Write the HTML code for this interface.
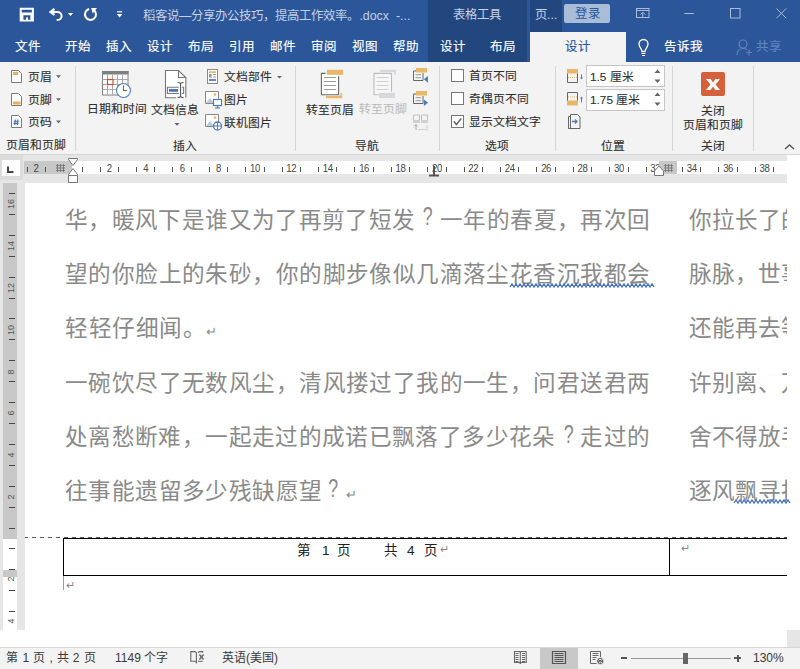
<!DOCTYPE html>
<html lang="zh-CN">
<head>
<meta charset="utf-8">
<style>
*{margin:0;padding:0;box-sizing:border-box}
html,body{width:800px;height:669px;overflow:hidden;background:#fff}
body{position:relative;font-family:"Liberation Sans",sans-serif;color:#333}
.a{position:absolute;white-space:nowrap}
svg{position:absolute;overflow:visible}
#title{left:0;top:0;width:800px;height:62px;background:#2B579A}
.tt{color:#fff;font-size:12.5px;line-height:16px;-webkit-text-stroke:0.15px #fff}
.rt{color:#2E2E2E;font-size:11.8px;line-height:16px;-webkit-text-stroke:0.1px #2E2E2E}
.sep{position:absolute;width:1px;background:#D5D5D5;top:66px;height:85px}
.tick{position:absolute;width:1px;height:5px;background:#555;top:167px}
.rnum{position:absolute;font-size:9.6px;line-height:10px;color:#444;top:163.6px;letter-spacing:-0.4px;transform:scaleY(1.05)}
.vt{position:absolute;left:9px;width:5.5px;height:1px;background:#444}
.vn{position:absolute;left:8px;font-size:9px;line-height:10px;color:#555;transform:rotate(-90deg);transform-origin:center}
.body{position:absolute;font-size:22.6px;line-height:30px;color:#8A8A8A;white-space:nowrap}
.jl{text-align:justify;text-align-last:justify}
.pm{font-size:13px;color:#888;margin-left:-1px}
.pm2{font-size:11px;color:#888;line-height:14px}
.ft{font-size:13.5px;line-height:18px;color:#222}
.st{font-size:12px;line-height:16px;color:#3A3A3A;margin-top:1.5px}
.q{display:inline-block;line-height:0;width:0.96em;text-align:center;font-size:1.12em;position:relative;left:4px;top:-2.5px;transform:scaleX(0.7);font-weight:300}
</style>
</head>
<body>
<!-- title bar + tabs -->
<div class="a" id="title"></div>
<div class="a" style="left:428px;top:0;width:99px;height:62px;background:#22467E"></div>
<div class="a" style="left:527px;top:0;width:3px;height:31px;background:#2B579A"></div>
<div class="a" style="left:530px;top:0;width:32px;height:32px;background:#22467E"></div>
<div class="a" style="left:530px;top:32px;width:96px;height:30px;background:#F3F3F3"></div>

<!-- QAT icons -->
<svg style="left:0;top:0" width="140" height="31">
  <path fill="#fff" fill-rule="evenodd" d="M19.7 7.7H33.9V21.6H19.7Z M21.7 9.7H31.9V12.6H21.7Z M23.4 15.2H30.4V19.8H23.4Z"/>
  <rect x="26" y="17.4" width="2" height="3" fill="#fff"/>
  <path d="M54.5 8.8l-4 3.1 4 3.1" fill="none" stroke="#fff" stroke-width="2.2" stroke-linejoin="miter"/>
  <path d="M50 11.9h7.5a4.1 4.1 0 0 1 0 8.2h-0.8" fill="none" stroke="#fff" stroke-width="2"/>
  <path d="M67.9 12.9h5.2l-2.6 3.1z" fill="#fff"/>
  <path d="M89.08 9.09A5.5 5.5 0 1 0 93.65 9.9" fill="none" stroke="#fff" stroke-width="2"/>
  <path d="M91.2 8h5.8l-4.3 5.5z" fill="#fff"/>
  <path d="M117 11.8h5.2" stroke="#fff" stroke-width="1.2"/>
  <path d="M116.9 14h5.4l-2.7 3.5z" fill="#fff"/>
</svg>
<div class="a" style="left:143px;top:7.5px;font-size:12.4px;line-height:16px;color:#C6D1E4">稻客说—分享办公技巧，提高工作效率。.docx&nbsp; -...</div>
<div class="a" style="left:453px;top:6.5px;font-size:12.4px;line-height:16px;color:#C6D1E4">表格工具</div>
<div class="a" style="left:535px;top:6.5px;font-size:12.4px;line-height:16px;color:#C6D1E4">页...</div>
<div class="a" style="left:564px;top:4px;width:46px;height:19px;background:#A9BCD8;border-radius:2px"></div>
<div class="a" style="left:574.5px;top:6px;font-size:12.5px;line-height:16px;color:#2B579A">登录</div>
<svg style="left:630px;top:0" width="170" height="31">
  <g fill="none" stroke="#A9BBD7" stroke-width="1">
    <rect x="6.5" y="8.5" width="12.5" height="9"/>
    <path d="M6.5 10.5h12.5M12.75 17.5v-5M10.5 14.5l2.25-2.25 2.25 2.25"/>
    <path d="M54.3 13.5h9.5"/>
    <rect x="100.5" y="8.5" width="9.5" height="9.5"/>
    <path d="M146.5 8.5l9.7 9.7M156.2 8.5l-9.7 9.7"/>
  </g>
</svg>

<!-- tabs -->
<div class="a tt" style="left:15px;top:39px">文件</div>
<div class="a tt" style="left:65px;top:39px">开始</div>
<div class="a tt" style="left:106px;top:39px">插入</div>
<div class="a tt" style="left:147px;top:39px">设计</div>
<div class="a tt" style="left:188px;top:39px">布局</div>
<div class="a tt" style="left:229px;top:39px">引用</div>
<div class="a tt" style="left:270px;top:39px">邮件</div>
<div class="a tt" style="left:311px;top:39px">审阅</div>
<div class="a tt" style="left:352px;top:39px">视图</div>
<div class="a tt" style="left:393px;top:39px">帮助</div>
<div class="a tt" style="left:440px;top:39px">设计</div>
<div class="a tt" style="left:490px;top:39px">布局</div>
<div class="a tt" style="left:565px;top:39px;color:#2B579A;-webkit-text-stroke:0.15px #2B579A">设计</div>
<svg style="left:632px;top:31px" width="30" height="31">
  <path d="M10 20.5c0-2.5-3-4-3-7.5a4.5 4.5 0 0 1 9 0c0 3.5-3 5-3 7.5z" fill="none" stroke="#fff" stroke-width="1.3"/>
  <path d="M9.5 22.5h4M10 24.5h3" stroke="#fff" stroke-width="1.1"/>
</svg>
<div class="a tt" style="left:664px;top:39px">告诉我</div>
<svg style="left:733px;top:31px" width="30" height="31">
  <circle cx="10" cy="13" r="4" fill="none" stroke="#6283BA" stroke-width="1.2"/>
  <path d="M4 24c0-4 2.5-6.5 6-6.5 2 0 3 .5 4 1.3" fill="none" stroke="#6283BA" stroke-width="1.2"/>
  <path d="M13 21.5h6M16 18.5v6" stroke="#6283BA" stroke-width="1.2"/>
</svg>
<div class="a tt" style="left:756px;top:39px;color:#6283BA;-webkit-text-stroke:0.15px #6283BA">共享</div>

<!-- ribbon -->
<div class="a" style="left:0;top:62px;width:800px;height:93px;background:#F3F3F3;border-bottom:1px solid #D6D6D6"></div>
<div class="sep" style="left:75px"></div>
<div class="sep" style="left:295px"></div>
<div class="sep" style="left:439px"></div>
<div class="sep" style="left:555px"></div>
<div class="sep" style="left:672px"></div>
<div class="sep" style="left:753px"></div>

<!-- group 1 -->
<svg style="left:0;top:62px" width="75" height="93">
  <g fill="#fff" stroke="#7A7A7A" stroke-width="1">
    <path d="M11.5 8.5h7l3 3v9h-10z"/>
    <path d="M11.5 31.5h7l3 3v9h-10z"/>
    <path d="M11.5 53.5h7l3 3v9h-10z"/>
  </g>
  <rect x="13" y="10" width="5" height="3" fill="#E8B05C"/>
  <rect x="13" y="39.5" width="7.5" height="3" fill="#E8B05C"/>
  <path d="M15.3 57.5l-0.6 5.5M17.9 57.5l-0.6 5.5M13.8 59.2h5M13.6 61.4h5" stroke="#3F6FB8" stroke-width="1.1" fill="none"/>
  <g fill="#666"><path d="M56 13.2h5l-2.5 2.7z"/><path d="M56 36.2h5l-2.5 2.7z"/><path d="M56 58.5h5l-2.5 2.7z"/></g>
</svg>
<div class="a rt" style="left:28px;top:68.5px">页眉</div>
<div class="a rt" style="left:28px;top:91.5px">页脚</div>
<div class="a rt" style="left:28px;top:113.5px">页码</div>
<div class="a rt" style="left:6px;top:137px">页眉和页脚</div>

<!-- group 2 insert -->
<svg style="left:75px;top:62px" width="220" height="93">
  <!-- calendar -->
  <rect x="27.5" y="9.5" width="25.5" height="23.5" fill="#fff" stroke="#808080"/>
  <rect x="27" y="9" width="26.5" height="3.5" fill="#808080"/>
  <g stroke="#A8A8A8" stroke-width="1"><path d="M27.5 17.5h25.5M27.5 22.5h25.5M27.5 27.5h25.5M32.5 12.5v20.5M37.5 12.5v20.5M42.5 12.5v20.5M47.5 12.5v20.5"/></g>
  <rect x="32.5" y="17.5" width="5.5" height="5" fill="#fff" stroke="#D24F28" stroke-width="1.2"/>
  <circle cx="48.5" cy="28.5" r="7" fill="#fff" stroke="#4A7BC0" stroke-width="1.1"/>
  <path d="M48.5 23.5v5h3.5" fill="none" stroke="#666" stroke-width="1.1"/>
  <!-- doc info -->
  <path d="M90.5 8.5H103.5L110.8 15.5V35.8H90.5Z" fill="#fff"/>
  <path d="M100.9 35.8H90.5V8.5H103.5L110.8 15.5V35.8" fill="none" stroke="#777" stroke-width="1.1"/>
  <path d="M103.5 8.5V15.5H110.8" fill="none" stroke="#777" stroke-width="1.1"/>
  <path d="M103.7 25.3H92.4V31.5H103.7M107.1 25.3H108.6V31.5H107.1" fill="none" stroke="#777" stroke-width="1.1"/>
  <rect x="94" y="27" width="9" height="2.8" fill="#4A78BE"/>
  <path d="M105.6 21.5V34.5M102.5 20.5Q105.6 20.5 105.6 22Q105.6 20.5 108.6 20.5M102.5 35.5Q105.6 35.5 105.6 34Q105.6 35.5 108.6 35.5" fill="none" stroke="#555" stroke-width="1.1"/>
  <path d="M99.5 61h5l-2.5 2.8z" fill="#666"/>
  <!-- quick parts -->
  <rect x="132.5" y="7.5" width="10" height="14" fill="#fff" stroke="#888"/>
  <rect x="134" y="9.3" width="7" height="1.6" fill="#E8B05C"/>
  <rect x="134" y="12" width="2.6" height="3.6" fill="#999"/>
  <path d="M138 12.5h3M138 15h3" stroke="#999"/>
  <rect x="134" y="17.2" width="7" height="1.6" fill="#3F6FB8"/>
  <path d="M202 14h5l-2.5 2.5z" fill="#666"/>
  <!-- picture -->
  <path d="M130.5 29.5h13v12h-13z" fill="#fff" stroke="#888"/>
  <path d="M131 41l4-5 4 5z" fill="#B9C9E0"/>
  <circle cx="140" cy="32.5" r="1.3" fill="#E8B05C"/>
  <rect x="138.5" y="37.5" width="8" height="6" fill="#fff" stroke="#4C7DC4" stroke-width="1.2"/>
  <path d="M142.5 43.5v2.5M140 46h5" stroke="#4C7DC4" stroke-width="1.2"/>
  <!-- online picture -->
  <path d="M130.5 52.5h13v12h-13z" fill="#fff" stroke="#888"/>
  <path d="M131 64l4-5 4 5z" fill="#B9C9E0"/>
  <circle cx="140" cy="55.5" r="1.3" fill="#E8B05C"/>
  <circle cx="142.5" cy="64" r="4" fill="#fff" stroke="#4C7DC4" stroke-width="1.3"/>
  <path d="M138.5 64h8M142.5 60v8" stroke="#4C7DC4" stroke-width="1"/>
</svg>
<div class="a rt" style="left:87px;top:101px">日期和时间</div>
<div class="a rt" style="left:151px;top:102px">文档信息</div>
<div class="a rt" style="left:224px;top:69px">文档部件</div>
<div class="a rt" style="left:224px;top:92px">图片</div>
<div class="a rt" style="left:224px;top:115px">联机图片</div>
<div class="a rt" style="left:173px;top:138px">插入</div>

<!-- group 3 nav -->
<svg style="left:295px;top:62px" width="145" height="93">
  <path d="M26.4 11.4H43.6V32.8H26.4Z" fill="#fff"/>
  <rect x="31.9" y="7.8" width="16.1" height="5" fill="#E8B76A"/>
  <path d="M30.6 11.4H26.4V32.8H43.6V14.2" fill="none" stroke="#6A6A6A" stroke-width="1.1"/>
  <g stroke="#9A9A9A"><path d="M29 15.5h12M29 19.5h12M29 23.5h12M29 27.5h12"/></g>
  <rect x="31" y="33.9" width="16.1" height="2.3" fill="#E8B76A"/>
  <rect x="45.5" y="30.9" width="1.6" height="5.3" fill="#E8B76A"/>
  <path d="M79 11.4H96.5V32.8H79Z" fill="#F7F7F7"/>
  <rect x="85" y="7.8" width="16" height="2.2" fill="#D8D8DC"/>
  <rect x="99" y="7.8" width="2" height="5" fill="#D8D8DC"/>
  <path d="M83.8 32.8H79V11.4H96.5V29.8" fill="none" stroke="#BDBDBD" stroke-width="1.1"/>
  <g stroke="#D0D0D0"><path d="M81.5 15.5h12M81.5 19.5h12M81.5 23.5h12M81.5 27.5h12"/></g>
  <rect x="84" y="30.9" width="16" height="5.1" fill="#D8D8DC"/>
  <!-- prev/next -->
  <rect x="121" y="6" width="11" height="4.5" fill="#E8B76A"/>
  <path d="M121 9h-2.5v9.5h9.5v-7.5" fill="none" stroke="#666"/>
  <path d="M120.5 12.7h5.5M120.5 15.7h5.5" stroke="#999"/>
  <path d="M133 14v6.7l-4.2-3.35z" fill="#4C7DC4"/>
  <rect x="121" y="29" width="11" height="4.5" fill="#E8B76A"/>
  <path d="M121 32h-2.5v9.5h9.5v-7.5" fill="none" stroke="#666"/>
  <path d="M120.5 35.7h5.5M120.5 38.7h5.5" stroke="#999"/>
  <path d="M128.9 37.4v6.7l4.2-3.35z" fill="#4C7DC4"/>
  <g fill="none" stroke="#BDBDBD"><path d="M118.5 60.5v-7.5h6v7.5M126.5 60.5v-7.5h6v7.5"/></g>
  <rect x="118" y="58" width="7" height="3" fill="#D0D0D0"/><rect x="126" y="58" width="7" height="3" fill="#D0D0D0"/>
  <path d="M121 68v-5.5M119 64.5l2-2 2 2" stroke="#AAA" fill="none"/>
  <path d="M123.5 67.5h1M125.5 67.5h1M127.5 67.5h1M129.5 67.5h1M132 63.5v1M132 65.5v1M132 67.5v1" stroke="#AAA"/>
</svg>
<div class="a rt" style="left:306px;top:101.5px">转至页眉</div>
<div class="a rt" style="left:359px;top:101px;color:#BDBDBD;-webkit-text-stroke:0.1px #BDBDBD">转至页脚</div>
<div class="a rt" style="left:355px;top:138px">导航</div>

<!-- group 4 options -->
<div class="a" style="left:451px;top:69px;width:13px;height:13px;border:1px solid #777;background:#fff"></div>
<div class="a" style="left:451px;top:92px;width:13px;height:13px;border:1px solid #777;background:#fff"></div>
<div class="a" style="left:451px;top:115px;width:13px;height:13px;border:1px solid #777;background:#fff"></div>
<svg style="left:451px;top:115px" width="13" height="13"><path d="M2.8 6.3l2.6 3.2 4.8-6" fill="none" stroke="#666" stroke-width="1.5"/></svg>
<div class="a rt" style="left:469px;top:67.5px">首页不同</div>
<div class="a rt" style="left:469px;top:90.5px">奇偶页不同</div>
<div class="a rt" style="left:469px;top:113.5px">显示文档文字</div>
<div class="a rt" style="left:485px;top:138px">选项</div>

<!-- group 5 position -->
<svg style="left:555px;top:62px" width="117" height="93">
  <rect x="12" y="7" width="11" height="4.5" fill="#E8B76A"/>
  <path d="M12.5 11.5v9h10v-9" fill="none" stroke="#666"/>
  <path d="M13 15.5h10" stroke="#E8B76A" stroke-dasharray="1 1"/>
  <path d="M26.5 12.5v4.5" stroke="#4C7DC4"/><path d="M25 15.5h3l-1.5 2z" fill="#4C7DC4"/>
  <path d="M12.5 39v-8.5h10V39" fill="none" stroke="#666"/>
  <path d="M13 35h10" stroke="#E8B76A" stroke-dasharray="1 1"/>
  <rect x="12" y="38.5" width="11" height="5" fill="#E8B76A"/>
  <path d="M26.5 36v4.5" stroke="#4C7DC4"/><path d="M25 36.5h3l-1.5 -2z" fill="#4C7DC4"/>
  <path d="M15.5 52.5h7l2.5 2.5v11.5h-9.5z" fill="none" stroke="#666"/>
  <path d="M13.5 54.5v12h2M13.5 54.5h2" fill="none" stroke="#666"/>
  <path d="M13.5 66.5h9.5" stroke="#666"/>
  <path d="M17 59.5h5M20 57.5l2 2-2 2" fill="none" stroke="#4C7DC4" stroke-width="1.3"/>
</svg>
<div class="a" style="left:586px;top:65px;width:79px;height:22px;border:1px solid #C6C6C6;background:#fff"></div>
<div class="a" style="left:586px;top:89px;width:79px;height:22px;border:1px solid #C6C6C6;background:#fff"></div>
<div class="a rt" style="left:590px;top:69px">1.5 厘米</div>
<div class="a rt" style="left:590px;top:92px">1.75 厘米</div>
<svg style="left:650px;top:62px" width="15" height="50">
  <path d="M4.5 11l3-3.5 3 3.5zM4.5 17.5l3 3.5 3-3.5zM4.5 34l3-3.5 3 3.5zM4.5 40.5l3 3.5 3-3.5z" fill="#666"/>
</svg>
<div class="a rt" style="left:601px;top:138px">位置</div>

<!-- group 6 close -->
<div class="a" style="left:701px;top:72px;width:24px;height:24px;background:#D6603C;border-radius:2px"></div>
<svg style="left:701px;top:72px" width="24" height="24"><path d="M5 7H9.6L12 10.4L14.4 7H19L14.5 12.4L19 18H14.4L12 14.4L9.6 18H5L9.5 12.4Z" fill="#fff"/></svg>
<div class="a rt" style="left:701px;top:103px">关闭</div>
<div class="a rt" style="left:683px;top:117px">页眉和页脚</div>
<div class="a rt" style="left:701px;top:138px">关闭</div>
<svg style="left:780px;top:140px" width="18" height="12"><path d="M5 9l4.5-4 4.5 4" fill="none" stroke="#555" stroke-width="1.4"/></svg>

<!-- doc -->
<div class="body jl" style="left:65px;top:205.5px;width:585px">华，暖风下是谁又为了再剪了短发<span class="q">?</span>一年的春夏，再次回</div>
<div class="body jl" style="left:65px;top:259.5px;width:585px">望的你脸上的朱砂，你的脚步像似几滴落尘花香沉我都会</div>
<div class="body" style="letter-spacing:0.6px;left:65px;top:314px">轻轻仔细闻。<span class="pm">↵</span></div>
<div class="body jl" style="left:65px;top:368.5px;width:585px">一碗饮尽了无数风尘，清风搂过了我的一生，问君送君两</div>
<div class="body jl" style="left:65px;top:423px;width:585px">处离愁断难，一起走过的成诺已飘落了多少花朵<span class="q">?</span>走过的</div>
<div class="body" style="letter-spacing:0.4px;left:65px;top:477px">往事能遗留多少残缺愿望<span class="q" style="left:-1.5px;width:0.98em">?</span><span class="pm">↵</span></div>
<div class="a" style="left:680px;top:190px;width:107px;height:320px;overflow:hidden">
<div class="body" style="left:9px;top:15.5px">你拉长了的</div>
<div class="body" style="left:9px;top:69.5px">脉脉，世事</div>
<div class="body" style="left:9px;top:124px">还能再去等</div>
<div class="body" style="left:9px;top:178.5px">许别离、万</div>
<div class="body" style="left:9px;top:233px">舍不得放手</div>
<div class="body" style="left:9px;top:287px">逐风飘寻找</div>
</div>
<svg style="left:510px;top:282.5px" width="145" height="6"><path d="M0 4 l2 -3 l2 3 l2 -3 l2 3 l2 -3 l2 3 l2 -3 l2 3 l2 -3 l2 3 l2 -3 l2 3 l2 -3 l2 3 l2 -3 l2 3 l2 -3 l2 3 l2 -3 l2 3 l2 -3 l2 3 l2 -3 l2 3 l2 -3 l2 3 l2 -3 l2 3 l2 -3 l2 3 l2 -3 l2 3 l2 -3 l2 3 l2 -3 l2 3 l2 -3 l2 3 l2 -3 l2 3 l2 -3 l2 3 l2 -3 l2 3 l2 -3 l2 3 l2 -3 l2 3 l2 -3 l2 3 l2 -3 l2 3 l2 -3 l2 3 l2 -3 l2 3 l2 -3 l2 3 l2 -3 l2 3 l2 -3 l2 3 l2 -3 l2 3 l2 -3 l2 3 l2 -3 l2 3 l2 -3 l2 3 l2 -3 l2 3" fill="none" stroke="#4472C4" stroke-width="1.3"/></svg>
<svg style="left:734px;top:499px" width="54" height="6"><path d="M0 4 l2 -3 l2 3 l2 -3 l2 3 l2 -3 l2 3 l2 -3 l2 3 l2 -3 l2 3 l2 -3 l2 3 l2 -3 l2 3 l2 -3 l2 3 l2 -3 l2 3 l2 -3 l2 3 l2 -3 l2 3 l2 -3 l2 3 l2 -3 l2 3 l2 -3 l2 3" fill="none" stroke="#4472C4" stroke-width="1.3"/></svg>
<div class="a" style="left:25px;top:537px;width:762px;height:1px;background:repeating-linear-gradient(90deg,#5A5A5A 0 3.5px,transparent 3.5px 7px,#5A5A5A 7px 8px)"></div>
<div class="a" style="left:63px;top:538px;width:724px;height:38px;border:1px solid #000;border-right:none"></div>
<div class="a" style="left:669px;top:538px;width:1px;height:38px;background:#000"></div>
<div class="a" style="left:63px;top:576px;width:1px;height:14px;background:#999"></div>
<div class="a ft" style="left:297px;top:541.5px">第</div><div class="a ft" style="left:322px;top:541.5px">1</div><div class="a ft" style="left:337px;top:541.5px">页</div><div class="a ft" style="left:384px;top:541.5px">共</div><div class="a ft" style="left:407px;top:541.5px">4</div><div class="a ft" style="left:424px;top:541.5px">页</div><div class="a pm2" style="left:440px;top:542px">↵</div>
<div class="a pm2" style="left:681px;top:541px">↵</div>
<div class="a pm2" style="left:66px;top:578px">↵</div>
<div class="a" style="left:0;top:647px;width:800px;height:22px;background:#F3F3F3;border-top:1px solid #D6D6D6"></div>
<div class="a st" style="left:5.5px;top:648.5px">第</div><div class="a st" style="left:22.5px;top:648.5px">1</div><div class="a st" style="left:32.5px;top:648.5px">页</div><div class="a st" style="left:49.5px;top:648.5px">,</div><div class="a st" style="left:56.5px;top:648.5px">共</div><div class="a st" style="left:72.8px;top:648.5px">2</div><div class="a st" style="left:83.7px;top:648.5px">页</div>
<div class="a st" style="left:115px;top:648.5px">1149 个字</div>
<svg style="left:188px;top:650px" width="20" height="16"><path d="M7.2 1.6H2.8V11.3H8.4M7.2 1.6L8.4 2.8V12.5M10 2.8L11.2 1.6H14.7V2.8M10 11.3H14.7" fill="none" stroke="#666" stroke-width="1.1"/><path d="M7.2 12.3L8.4 13.7L9.6 12.3Z" fill="#666"/><path d="M11.4 4.5L15.6 9.5M15.6 4.5L11.4 9.5" stroke="#666" stroke-width="1.5"/></svg>
<div class="a st" style="left:222px;top:648.5px">英语(美国)</div>
<svg style="left:510px;top:648px" width="20" height="18"><path d="M4.5 3.5H9.5L10.3 4.3L11.1 3.5H16.2V14.5H11.1L10.3 15.3L9.5 14.5H4.5Z" fill="none" stroke="#666" stroke-width="1.1"/><path d="M10.3 4.3V16" stroke="#666" stroke-width="1.1"/><path d="M5.5 5.5h3M5.5 7.5h3M5.5 9.5h3M5.5 11.5h3M5.5 13.5h3M12 5.5h3M12 7.5h3M12 9.5h3M12 11.5h3M12 13.5h3" stroke="#666" stroke-width="1"/></svg>
<div class="a" style="left:540px;top:648px;width:38px;height:21px;background:#C8C8C8"></div>
<svg style="left:549px;top:648px" width="20" height="18"><path d="M3.5 3.5H16.5V15.5H3.5Z" fill="none" stroke="#555" stroke-width="1.2"/><path d="M5.5 5.5h9M5.5 7.5h9M5.5 9.5h9M5.5 11.5h9M5.5 13.5h9" stroke="#555" stroke-width="1"/></svg>
<svg style="left:588px;top:648px" width="20" height="18"><path d="M12.5 9.5V3.5H2.5V15.5H8.5" fill="none" stroke="#666" stroke-width="1"/><path d="M4.5 5.5h6M4.5 7.5h6M4.5 9.5h4M4.5 11.5h3" stroke="#666"/><circle cx="12.3" cy="13" r="3.6" fill="#666" stroke="#F3F3F3" stroke-width="0.8"/><path d="M10.5 12.5l1.5-1.5 1 1 1.5-.5M11 14.8l1.5-.8 1.6 1" stroke="#F3F3F3" stroke-width="0.9" fill="none"/></svg>
<div class="a" style="left:621px;top:657px;width:6px;height:2px;background:#555"></div>
<div class="a" style="left:631px;top:658px;width:100px;height:1px;background:#999"></div>
<div class="a" style="left:683px;top:653px;width:5px;height:11px;background:#666"></div>
<div class="a" style="left:734px;top:657px;width:7px;height:2px;background:#555"></div>
<div class="a" style="left:736.5px;top:654.5px;width:2px;height:7px;background:#555"></div>
<div class="a st" style="left:753px;top:648.5px">130%</div>
<!-- rulers -->
<div class="a" style="left:0;top:155px;width:787px;height:28px;background:#E6E6E6"></div>
<div class="a" style="left:0;top:155px;width:23px;height:25px;background:#DCDCDC"></div><div class="a" style="left:2px;top:160px;width:17.5px;height:16px;background:#fff"></div>
<svg style="left:0;top:155px" width="22" height="25"><path d="M8 11.5v5.5h5.5" fill="none" stroke="#444" stroke-width="2"/></svg>
<div class="a" style="left:24px;top:161px;width:763px;height:13px;background:#fff"></div>
<div class="a" style="left:24px;top:161px;width:48px;height:13px;background:#C8C8C8"></div>
<div class="tick" style="left:27px"></div>
<div class="tick" style="left:45px"></div>
<div class="tick" style="left:63px"></div>
<div class="tick" style="left:82px"></div>
<div class="tick" style="left:100px"></div>
<div class="tick" style="left:118px"></div>
<div class="tick" style="left:136px"></div>
<div class="tick" style="left:154px"></div>
<div class="tick" style="left:172px"></div>
<div class="tick" style="left:191px"></div>
<div class="tick" style="left:209px"></div>
<div class="tick" style="left:227px"></div>
<div class="tick" style="left:245px"></div>
<div class="tick" style="left:264px"></div>
<div class="tick" style="left:282px"></div>
<div class="tick" style="left:300px"></div>
<div class="tick" style="left:318px"></div>
<div class="tick" style="left:336px"></div>
<div class="tick" style="left:354px"></div>
<div class="tick" style="left:373px"></div>
<div class="tick" style="left:391px"></div>
<div class="tick" style="left:409px"></div>
<div class="tick" style="left:427px"></div>
<div class="tick" style="left:446px"></div>
<div class="tick" style="left:464px"></div>
<div class="tick" style="left:482px"></div>
<div class="tick" style="left:500px"></div>
<div class="tick" style="left:518px"></div>
<div class="tick" style="left:536px"></div>
<div class="tick" style="left:555px"></div>
<div class="tick" style="left:573px"></div>
<div class="tick" style="left:591px"></div>
<div class="tick" style="left:609px"></div>
<div class="tick" style="left:628px"></div>
<div class="tick" style="left:646px"></div>
<div class="tick" style="left:664px"></div>
<div class="tick" style="left:682px"></div>
<div class="tick" style="left:700px"></div>
<div class="tick" style="left:718px"></div>
<div class="tick" style="left:737px"></div>
<div class="tick" style="left:755px"></div>
<div class="tick" style="left:773px"></div>
<div class="rnum" style="left:109.3px;width:20px;margin-left:-10px;text-align:center">2</div>
<div class="rnum" style="left:145.7px;width:20px;margin-left:-10px;text-align:center">4</div>
<div class="rnum" style="left:182.1px;width:20px;margin-left:-10px;text-align:center">6</div>
<div class="rnum" style="left:218.5px;width:20px;margin-left:-10px;text-align:center">8</div>
<div class="rnum" style="left:254.9px;width:20px;margin-left:-10px;text-align:center">10</div>
<div class="rnum" style="left:291.3px;width:20px;margin-left:-10px;text-align:center">12</div>
<div class="rnum" style="left:327.7px;width:20px;margin-left:-10px;text-align:center">14</div>
<div class="rnum" style="left:364.1px;width:20px;margin-left:-10px;text-align:center">16</div>
<div class="rnum" style="left:400.5px;width:20px;margin-left:-10px;text-align:center">18</div>
<div class="rnum" style="left:436.9px;width:20px;margin-left:-10px;text-align:center">20</div>
<div class="rnum" style="left:473.3px;width:20px;margin-left:-10px;text-align:center">22</div>
<div class="rnum" style="left:509.7px;width:20px;margin-left:-10px;text-align:center">24</div>
<div class="rnum" style="left:546.1px;width:20px;margin-left:-10px;text-align:center">26</div>
<div class="rnum" style="left:582.5px;width:20px;margin-left:-10px;text-align:center">28</div>
<div class="rnum" style="left:618.9px;width:20px;margin-left:-10px;text-align:center">30</div>
<div class="rnum" style="left:655.3px;width:20px;margin-left:-10px;text-align:center">32</div>
<div class="rnum" style="left:691.7px;width:20px;margin-left:-10px;text-align:center">34</div>
<div class="rnum" style="left:728.1px;width:20px;margin-left:-10px;text-align:center">36</div>
<div class="rnum" style="left:764.5px;width:20px;margin-left:-10px;text-align:center">38</div>
<div class="rnum" style="left:26px;width:20px;text-align:center">2</div>
<div class="a" style="left:659px;top:161px;width:18px;height:13px;background:#C8C8C8"></div>
<svg style="left:55px;top:161px" width="12" height="13"><path d="M2.5 3v8M5.5 3v8M8.5 3v8M1 4.5h9M1 7h9M1 9.5h9" stroke="#777" stroke-width="0.9"/></svg>
<svg style="left:663px;top:161px" width="12" height="13"><path d="M2.5 3v8M5.5 3v8M8.5 3v8M1 4.5h9M1 7h9M1 9.5h9" stroke="#777" stroke-width="0.9"/></svg>
<svg style="left:66px;top:156px" width="14" height="28"><path d="M2.5 2.5h9v1l-4.5 6-4.5-6z" fill="#fff" stroke="#777"/><path d="M7 12.5l4.5 6v1h-9v-1z" fill="#fff" stroke="#777"/><path d="M2.5 19.5h9v7h-9z" fill="#fff" stroke="#777"/></svg>
<svg style="left:652px;top:165px" width="14" height="12"><path d="M7 1l4.5 5v4.5h-9V6z" fill="#fff" stroke="#777"/></svg>
<svg style="left:427px;top:164px" width="14" height="14"><path d="M7 2v10M2 11.5h10" stroke="#555" stroke-width="2"/></svg>
<div class="a" style="left:0;top:183px;width:25px;height:447px;background:#E6E6E6"></div>
<div class="a" style="left:3px;top:183px;width:14px;height:447px;background:#fff"></div>
<div class="a" style="left:3px;top:183px;width:14px;height:355.5px;background:#C8C8C8"></div>
<div class="a" style="left:3px;top:570px;width:14px;height:7px;background:#C8C8C8"></div>
<div class="vt" style="top:528px"></div>
<div class="vt" style="top:507px"></div>
<div class="vt" style="top:486px"></div>
<div class="vt" style="top:465px"></div>
<div class="vt" style="top:444px"></div>
<div class="vt" style="top:423px"></div>
<div class="vt" style="top:402px"></div>
<div class="vt" style="top:381px"></div>
<div class="vt" style="top:360px"></div>
<div class="vt" style="top:339px"></div>
<div class="vt" style="top:318px"></div>
<div class="vt" style="top:298px"></div>
<div class="vt" style="top:277px"></div>
<div class="vt" style="top:256px"></div>
<div class="vt" style="top:235px"></div>
<div class="vt" style="top:214px"></div>
<div class="vt" style="top:193px"></div>
<div class="vt" style="top:548px"></div>
<div class="vt" style="top:569px"></div>
<div class="vt" style="top:590px"></div>
<div class="vn" style="top:496.9px;width:14px;margin-left:-4.5px;margin-top:-5px;text-align:center">2</div>
<div class="vn" style="top:455.1px;width:14px;margin-left:-4.5px;margin-top:-5px;text-align:center">4</div>
<div class="vn" style="top:413.3px;width:14px;margin-left:-4.5px;margin-top:-5px;text-align:center">6</div>
<div class="vn" style="top:371.5px;width:14px;margin-left:-4.5px;margin-top:-5px;text-align:center">8</div>
<div class="vn" style="top:329.7px;width:14px;margin-left:-4.5px;margin-top:-5px;text-align:center">10</div>
<div class="vn" style="top:287.9px;width:14px;margin-left:-4.5px;margin-top:-5px;text-align:center">12</div>
<div class="vn" style="top:246.1px;width:14px;margin-left:-4.5px;margin-top:-5px;text-align:center">14</div>
<div class="vn" style="top:204.3px;width:14px;margin-left:-4.5px;margin-top:-5px;text-align:center">16</div>
<div class="vt" style="top:611px"></div>
<div class="vn" style="top:579px;width:14px;margin-left:-4.5px;margin-top:-5px;text-align:center">2</div>
<div class="vn" style="top:620.7px;width:14px;margin-left:-4.5px;margin-top:-5px;text-align:center">4</div>
<div class="a" style="left:787px;top:630px;width:13px;height:17px;background:#E6E6E6"></div>
</body>
</html>
